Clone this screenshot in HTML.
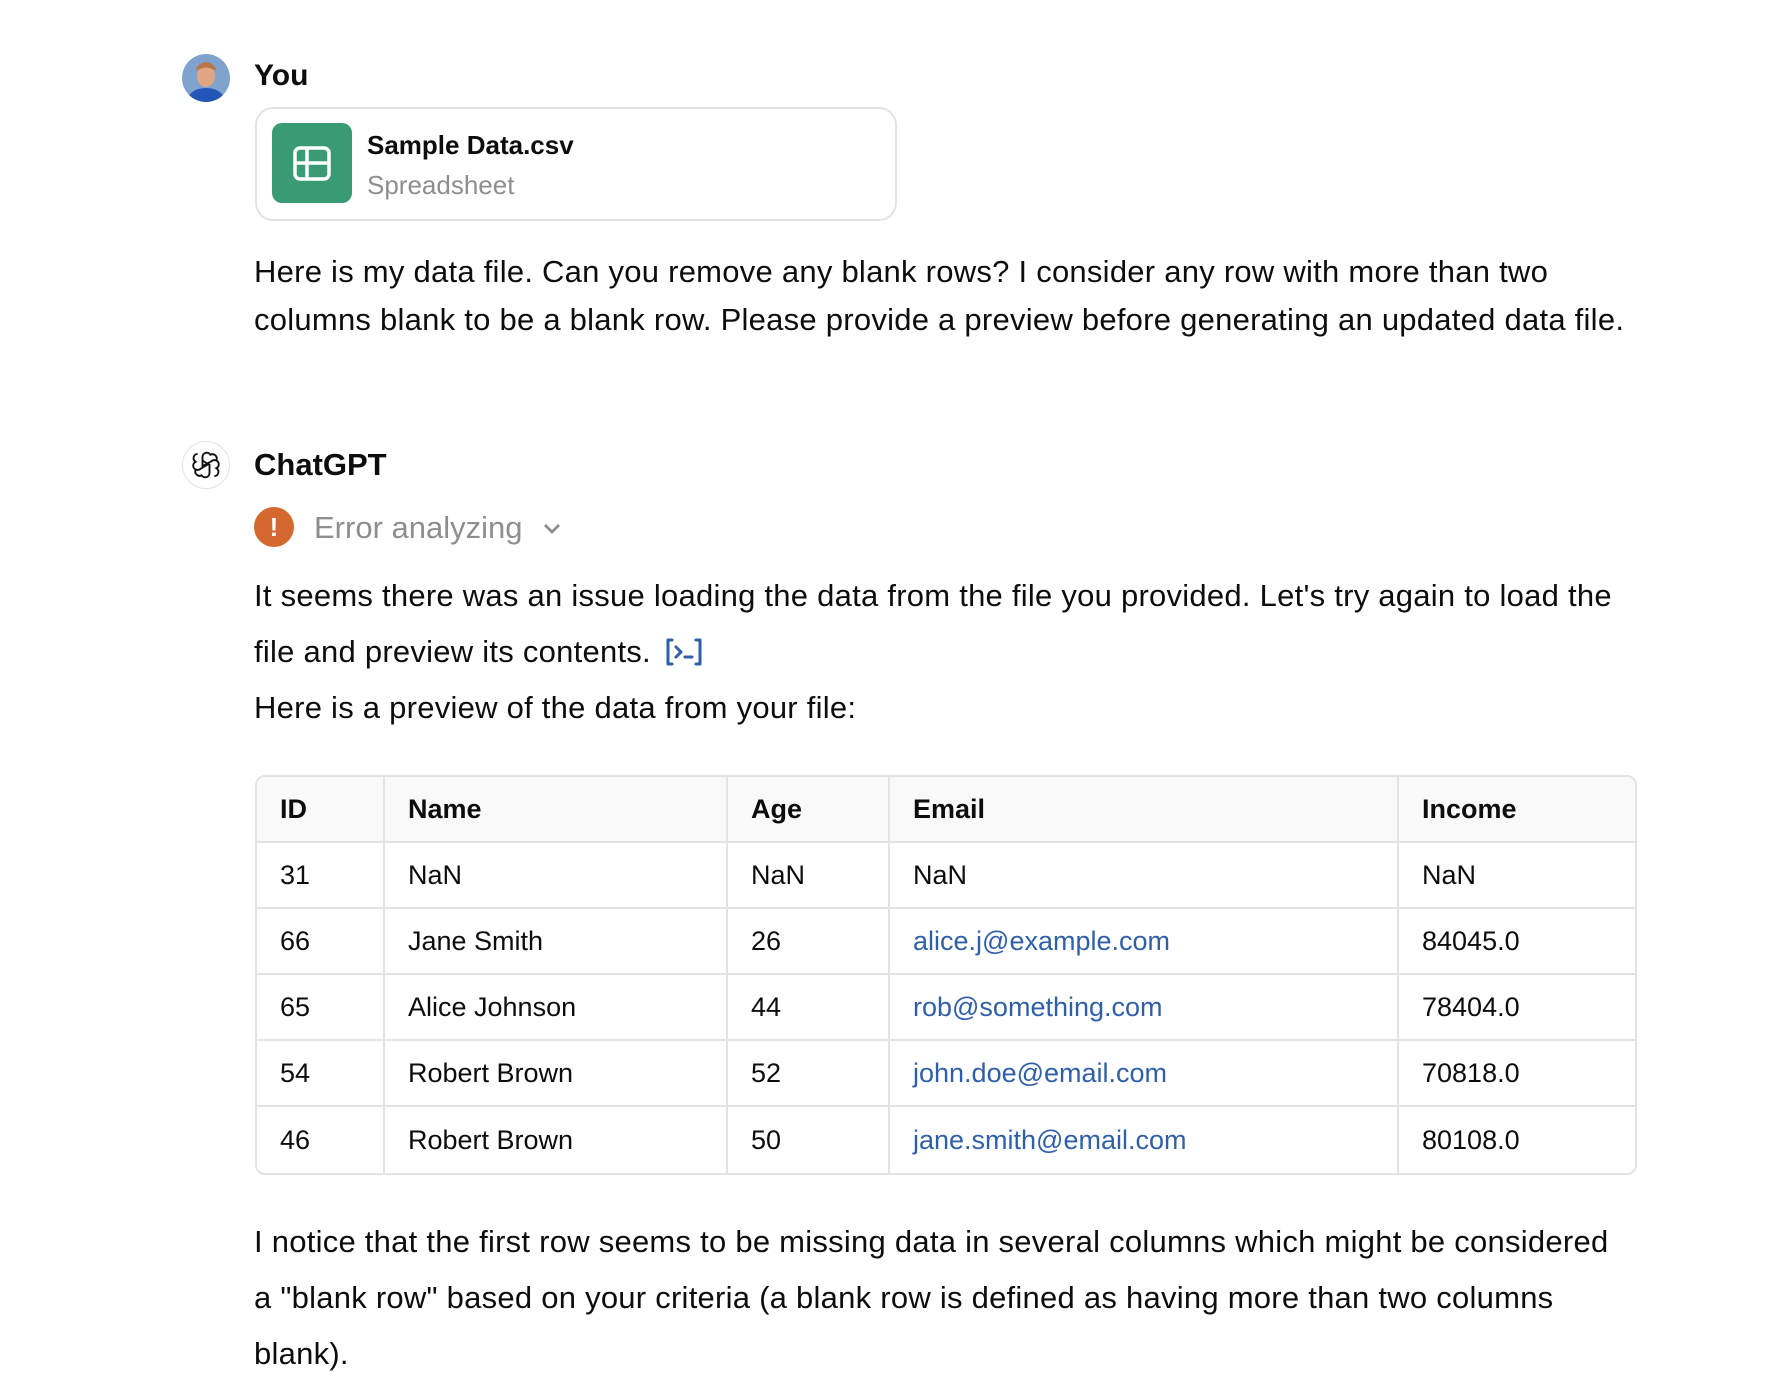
<!DOCTYPE html>
<html><head><meta charset="utf-8"><style>
*{margin:0;padding:0;box-sizing:border-box}
body{width:1792px;height:1394px;background:#fff;font-family:"Liberation Sans",sans-serif;color:#0d0d0d;position:relative;overflow:hidden}
.a{position:absolute;white-space:nowrap}
.t{font-size:31px;letter-spacing:0.25px}
table{position:absolute;left:255px;top:775px;width:1382px;border-collapse:separate;border-spacing:0;border:2px solid #e3e3e3;border-radius:10px;overflow:hidden;font-size:27px}
td,th{height:66px;text-align:left;padding:0 0 0 23px;border-right:2px solid #e3e3e3;border-bottom:2px solid #e3e3e3;font-weight:normal}
th{background:#f9f9f9;font-weight:bold}
tr td:last-child,tr th:last-child{border-right:none}
tr:last-child td{border-bottom:none}
.l{color:#2f5fa8}
</style></head><body>
<svg class="a" style="left:182px;top:54px" width="48" height="48" viewBox="0 0 48 48">
<defs><clipPath id="c"><circle cx="24" cy="24" r="24"/></clipPath></defs>
<g clip-path="url(#c)"><rect width="48" height="48" fill="#7fa3cc"/><ellipse cx="24" cy="22" rx="9" ry="11" fill="#e0a684"/><path d="M14 14 Q24 2 34 14 L33 17 Q24 10 15 17Z" fill="#b8764a"/><path d="M4 48 Q8 34 24 34 Q40 34 44 48Z" fill="#2456b8"/></g></svg>
<div class="a" style="left:254px;top:59px;font-size:30px;font-weight:bold">You</div>
<div class="a" style="left:255px;top:107px;width:642px;height:114px;border:2px solid #e3e3e3;border-radius:18px"></div>
<div class="a" style="left:272px;top:123px;width:80px;height:80px;background:#3a9a74;border-radius:10px"></div>
<svg class="a" style="left:292px;top:143px" width="40" height="40" viewBox="0 0 40 40"><rect x="3" y="5" width="34" height="31" rx="5" fill="none" stroke="#fff" stroke-width="3.5"/><path d="M3 20H37M15 5V36" stroke="#fff" stroke-width="3.5"/></svg>
<div class="a" style="left:367px;top:130px;font-size:26px;font-weight:bold">Sample Data.csv</div>
<div class="a" style="left:367px;top:170px;font-size:26px;color:#8e8e8e">Spreadsheet</div>
<div class="a t" style="left:254px;top:248px;line-height:48px">Here is my data file. Can you remove any blank rows? I consider any row with more than two<br>columns blank to be a blank row. Please provide a preview before generating an updated data file.</div>
<div class="a" style="left:182px;top:441px;width:48px;height:48px;border:1.5px solid #e3e3e3;border-radius:50%"></div>
<svg class="a" style="left:191px;top:450px" width="30" height="30" viewBox="0 0 24 24" fill="none" stroke="#0d0d0d" stroke-width="1.5"><path d="M9.2 8.5V5.6a3.4 3.4 0 0 1 6.3-1.8 3.4 3.4 0 0 1 4.8 4.3M14.8 9.9l2.5-1.5a3.4 3.4 0 0 1 3 6.2 3.4 3.4 0 0 1-1.6 6.3M14.8 15.5v2.9a3.4 3.4 0 0 1-6.3 1.8 3.4 3.4 0 0 1-4.8-4.3M9.2 14.1l-2.5 1.5a3.4 3.4 0 0 1-3-6.2 3.4 3.4 0 0 1 1.6-6.3M9.2 8.5l5.6 3.3v3.7M14.8 9.9 9.2 13v-4.5M9.2 14.1l5.6-3.3"/></svg>
<div class="a" style="left:254px;top:447px;font-size:31px;font-weight:bold">ChatGPT</div>
<div class="a" style="left:254px;top:507px;width:40px;height:40px;border-radius:50%;background:#d4682f;color:#fff;font-weight:bold;font-size:26px;text-align:center;line-height:40px">!</div>
<div class="a" style="left:314px;top:510px;font-size:31px;color:#8e8e8e">Error analyzing</div>
<svg class="a" style="left:541px;top:517px" width="22" height="22" viewBox="0 0 22 22"><path d="M4 8l7 7 7-7" fill="none" stroke="#8e8e8e" stroke-width="2.8"/></svg>
<div class="a t" style="left:254px;top:568px;line-height:56px">It seems there was an issue loading the data from the file you provided. Let's try again to load the<br>file and preview its contents. <svg style="vertical-align:-5px;margin-left:4px" width="40" height="30" viewBox="0 0 40 30"><path d="M8 3H4v24h4M32 3h4v24h-4" fill="none" stroke="#2f5fa8" stroke-width="3" stroke-linecap="round" stroke-linejoin="round"/><path d="M12 10l5 5-5 5M21 20h7" fill="none" stroke="#2f5fa8" stroke-width="3" stroke-linecap="round" stroke-linejoin="round"/></svg></div>
<div class="a t" style="left:254px;top:690px">Here is a preview of the data from your file:</div>
<table>
<colgroup><col style="width:128px"><col style="width:343px"><col style="width:162px"><col style="width:509px"><col></colgroup>
<tr><th>ID</th><th>Name</th><th>Age</th><th>Email</th><th>Income</th></tr>
<tr><td>31</td><td>NaN</td><td>NaN</td><td>NaN</td><td>NaN</td></tr>
<tr><td>66</td><td>Jane Smith</td><td>26</td><td class="l">alice.j@example.com</td><td>84045.0</td></tr>
<tr><td>65</td><td>Alice Johnson</td><td>44</td><td class="l">rob@something.com</td><td>78404.0</td></tr>
<tr><td>54</td><td>Robert Brown</td><td>52</td><td class="l">john.doe@email.com</td><td>70818.0</td></tr>
<tr><td>46</td><td>Robert Brown</td><td>50</td><td class="l">jane.smith@email.com</td><td>80108.0</td></tr>
</table>
<div class="a t" style="left:254px;top:1214px;line-height:56px">I notice that the first row seems to be missing data in several columns which might be considered<br>a "blank row" based on your criteria (a blank row is defined as having more than two columns<br>blank).</div>
</body></html>
